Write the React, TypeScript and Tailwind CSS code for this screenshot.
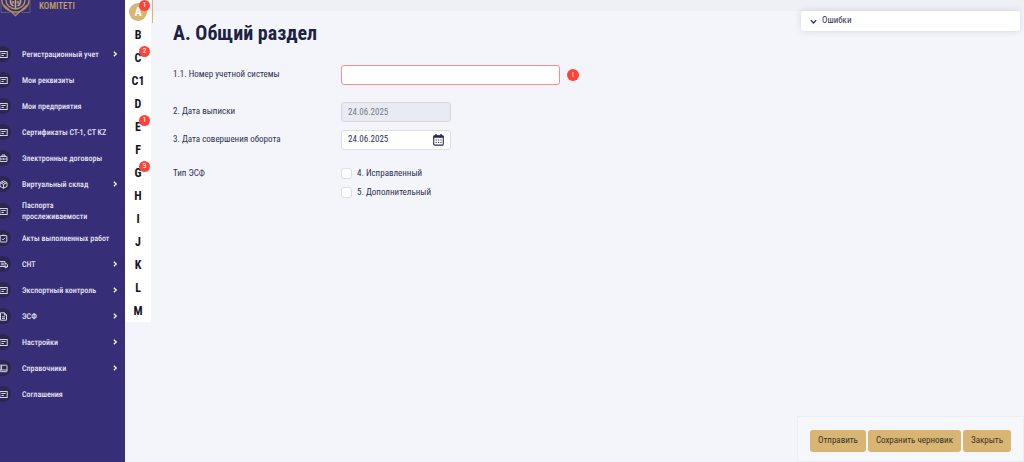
import { type ReactNode, useState } from "react";

type IconName = "card" | "case" | "box" | "check" | "truck" | "doc" | "book";

type MenuItem = { label: string; icon: IconName; expandable?: boolean; tall?: boolean };

const menu: MenuItem[] = [
  { label: "Регистрационный учет", icon: "card", expandable: true },
  { label: "Мои реквизиты", icon: "card" },
  { label: "Мои предприятия", icon: "card" },
  { label: "Сертификаты СТ-1, СТ KZ", icon: "card" },
  { label: "Электронные договоры", icon: "case" },
  { label: "Виртуальный склад", icon: "box", expandable: true },
  { label: "Паспорта прослеживаемости", icon: "card", tall: true },
  { label: "Акты выполненных работ", icon: "check" },
  { label: "СНТ", icon: "truck", expandable: true },
  { label: "Экспортный контроль", icon: "card", expandable: true },
  { label: "ЭСФ", icon: "doc", expandable: true },
  { label: "Настройки", icon: "card", expandable: true },
  { label: "Справочники", icon: "book", expandable: true },
  { label: "Соглашения", icon: "card" },
];

const sections: { id: string; errors?: number }[] = [
  { id: "A", errors: 1 },
  { id: "B" },
  { id: "C", errors: 2 },
  { id: "C1" },
  { id: "D" },
  { id: "E", errors: 1 },
  { id: "F" },
  { id: "G", errors: 3 },
  { id: "H" },
  { id: "I" },
  { id: "J" },
  { id: "K" },
  { id: "L" },
  { id: "M" },
];

const iconShapes: Record<IconName, ReactNode> = {
  card: (
    <>
      <rect x="0.8" y="1.5" width="7.4" height="6" />
      <path d="M2.4 3.5h4.2M2.4 5.5h2.4" />
    </>
  ),
  case: (
    <>
      <rect x="1" y="2.5" width="7" height="5" rx="0.5" />
      <path d="M3 2.5V1h3v1.5M1 5h7M4.5 4.3v1.4" />
    </>
  ),
  box: (
    <>
      <path d="M4.5 0.8 8 2.6v3.8L4.5 8.2 1 6.4V2.6z" />
      <path d="M1 2.6l3.5 1.8L8 2.6M4.5 4.4v3.8M2.7 1.7l3.5 1.8" />
    </>
  ),
  check: (
    <>
      <rect x="1.2" y="1.5" width="6.6" height="6.5" rx="0.5" />
      <path d="M3 1.3h3M3 4.8l1.1 1.1 2-2.2" />
    </>
  ),
  truck: (
    <>
      <path d="M0.5 1.5h5.5v5H0.5zM6 3.5h1.5L8.5 5v2H6M1.8 3.2h3M1.8 4.8h3" />
      <circle cx="6.8" cy="7.2" r="0.7" />
    </>
  ),
  doc: <path d="M1.5 0.8h4L7.5 3v5.2h-6zM5.3 0.8V3h2.2M3 4.8h3M3 6.4h3" />,
  book: (
    <>
      <rect x="1" y="1.2" width="7" height="6.5" rx="0.5" />
      <path d="M1 6h7M2.6 1.2V6" />
    </>
  ),
};

function MenuIcon({ name }: { name: IconName }) {
  return (
    <span className="-ml-[5px] flex size-4 shrink-0 items-center justify-center rounded-full bg-[#2b2750]">
      <svg viewBox="0 0 9 9" className="size-[9px]" fill="none" stroke="#d5d3e4" strokeWidth="1" aria-hidden="true">
        {iconShapes[name]}
      </svg>
    </span>
  );
}

function Emblem() {
  return (
    <svg viewBox="0 0 32 17" className="h-[17px] w-8 shrink-0" fill="none" stroke="#b3925f" aria-hidden="true">
      <path d="M1 0v12.5h8.5M30 0v12.5h-8.5" strokeWidth="0.6" opacity="0.7" />
      <path d="M4 5l11.5 10.8L27 5" strokeWidth="1.1" />
      <path d="M7.5 9.5l8 4.5 8-4.5" strokeWidth="0.7" />
      <path d="M2 0a13.5 12 0 0 0 27 0" strokeWidth="1.3" />
      <path d="M6 0a9.5 9 0 0 0 19 0" strokeWidth="1.4" />
      <path
        d="M10.5 0v2.5q0.5 2.5 3 3.5M20.5 0v2.5q-0.5 2.5-3 3.5M15.5 0v8.5M13 1v2.5M18 1v2.5"
        stroke="#cdaa73"
        strokeWidth="1.6"
      />
    </svg>
  );
}

function Chevron({ className }: { className: string }) {
  return (
    <svg viewBox="0 0 6 6" className={className} fill="none" stroke="currentColor" strokeWidth="1.2" aria-hidden="true">
      <path d="M1.8 0.7 4.3 3 1.8 5.3" />
    </svg>
  );
}

function CalendarIcon() {
  return (
    <svg viewBox="0 0 11 12" className="h-3 w-[11px]" fill="none" stroke="#2a2d55" aria-hidden="true">
      <rect x="0.7" y="1.7" width="9.6" height="9.4" rx="1" strokeWidth="1.1" />
      <path d="M0.5 2.7h10" strokeWidth="2.2" />
      <path d="M3 0v2M8 0v2" strokeWidth="1.4" />
      <path d="M2.6 6h6.4M2.6 8.5h6.4" strokeWidth="1.2" strokeDasharray="1.2 1.2" />
    </svg>
  );
}

function Sidebar() {
  return (
    <aside className="w-[125px] shrink-0 bg-[#362f78] text-[#e6e4f2]">
      <header className="flex h-[41px] items-start">
        <Emblem />
        <span className="ml-[7px] text-[9px] leading-[13px] font-medium text-[#c4a067]">KOMITETI</span>
      </header>
      <nav aria-label="Главное меню">
        {menu.map((item) => (
          <a
            key={item.label}
            href="#"
            className={`flex items-center pr-[7px] text-[8px] leading-[11px] font-medium [text-rendering:geometricPrecision] ${item.tall ? "h-7" : "h-[26px]"}`}
          >
            <MenuIcon name={item.icon} />
            <span className="ml-[11px] flex-1">{item.label}</span>
            {item.expandable && <Chevron className="size-[6px] shrink-0 text-white" />}
          </a>
        ))}
      </nav>
    </aside>
  );
}

function SectionRail() {
  return (
    <nav aria-label="Разделы" className="w-[26px] shrink-0 self-start bg-white">
      {sections.map((s, i) => (
        <a
          key={s.id}
          href="#"
          className="flex h-[23px] items-center justify-center text-[12px] leading-[18px] font-bold text-[#15151f]"
        >
          <span
            className={`relative flex size-[18px] items-center justify-center rounded-full ${i === 0 ? "bg-[#d9b574] text-white" : ""}`}
          >
            {s.id}
            {s.errors && (
              <span className="absolute -top-[3px] -right-[3px] flex size-[11px] items-center justify-center rounded-full bg-[#ff4338] text-[8px] leading-none font-normal text-white">
                {s.errors}
              </span>
            )}
          </span>
        </a>
      ))}
    </nav>
  );
}

function GoldButton({ children }: { children: ReactNode }) {
  return (
    <button type="button" className="h-[22px] rounded-[3px] bg-[#d9b574] px-2 text-[9px] text-[#3b3326]">
      {children}
    </button>
  );
}

function Tick({ label }: { label: string }) {
  return (
    <label className="flex items-center gap-[5px] text-[9px] leading-[11px]">
      <input
        type="checkbox"
        className="size-[11px] appearance-none rounded-[3px] border border-[#dcdee8] bg-white checked:bg-[#d9b574]"
      />
      {label}
    </label>
  );
}

export default function App() {
  const [number, setNumber] = useState("");
  const [date, setDate] = useState("24.06.2025");

  return (
    <div className="flex min-h-screen bg-[#f4f5fb] font-['Roboto_Condensed','Roboto',sans-serif] text-[#2e3150]">
      <Sidebar />
      <SectionRail />
      <main className="relative flex min-w-0 flex-1 flex-col justify-between">
        <div className="h-[11px] bg-[#eff0f5]" />
        <span className="absolute top-0 left-px h-[23px] w-px bg-[#d9b574]" />
        <div className="flex flex-1 items-start justify-between pr-1">
          <form className="pt-2.5 pl-[22px]">
            <h1 className="text-[20px] leading-6 font-bold text-[#1b2345]">A. Общий раздел</h1>
            <div className="mt-5 grid grid-cols-[168px_auto] items-center text-[9px]">
              <label htmlFor="number">1.1. Номер учетной системы</label>
              <div className="flex items-center gap-[7px]">
                <input
                  id="number"
                  value={number}
                  onChange={(e) => setNumber(e.target.value)}
                  className="h-5 w-[219px] rounded-[3px] border border-[#fb8d8d] bg-white px-1.5"
                />
                <span className="flex size-3 items-center justify-center rounded-full bg-[#ff4338] text-[8px] leading-none text-white">
                  !
                </span>
              </div>
              <label htmlFor="issued" className="mt-[17px]">
                2. Дата выписки
              </label>
              <input
                id="issued"
                disabled
                value="24.06.2025"
                className="mt-[17px] h-5 w-[110px] rounded-[3px] border border-[#d5d8e1] bg-[#e8ebf2] px-1.5 text-[#777a8b]"
              />
              <label htmlFor="turnover" className="mt-2">
                3. Дата совершения оборота
              </label>
              <div className="mt-2 flex h-5 w-[110px] items-center rounded-[3px] border border-[#dcdee8] bg-white px-1.5">
                <input
                  id="turnover"
                  value={date}
                  onChange={(e) => setDate(e.target.value)}
                  className="min-w-0 flex-1 bg-transparent"
                />
                <button type="button" aria-label="Выбрать дату">
                  <CalendarIcon />
                </button>
              </div>
            </div>
            <fieldset className="mt-[18px] grid grid-cols-[168px_auto] items-start text-[9px]" aria-labelledby="kind">
              <span id="kind" className="leading-[11px]">
                Тип ЭСФ
              </span>
              <div className="flex flex-col gap-2">
                <Tick label="4. Исправленный" />
                <Tick label="5. Дополнительный" />
              </div>
            </fieldset>
          </form>
          <button
            type="button"
            className="flex h-5 w-[219px] items-center gap-[5px] rounded-[3px] bg-white px-[9px] text-[9px] shadow-[0_0_6px_rgba(60,65,100,0.18)]"
          >
            <Chevron className="size-[7px] rotate-90" />
            Ошибки
          </button>
        </div>
        <footer className="flex gap-0.5 self-end border border-[#eceef3] bg-[#f6f7fa] px-3 pt-[13px] pb-[9px]">
          <GoldButton>Отправить</GoldButton>
          <GoldButton>Сохранить черновик</GoldButton>
          <GoldButton>Закрыть</GoldButton>
        </footer>
      </main>
    </div>
  );
}
